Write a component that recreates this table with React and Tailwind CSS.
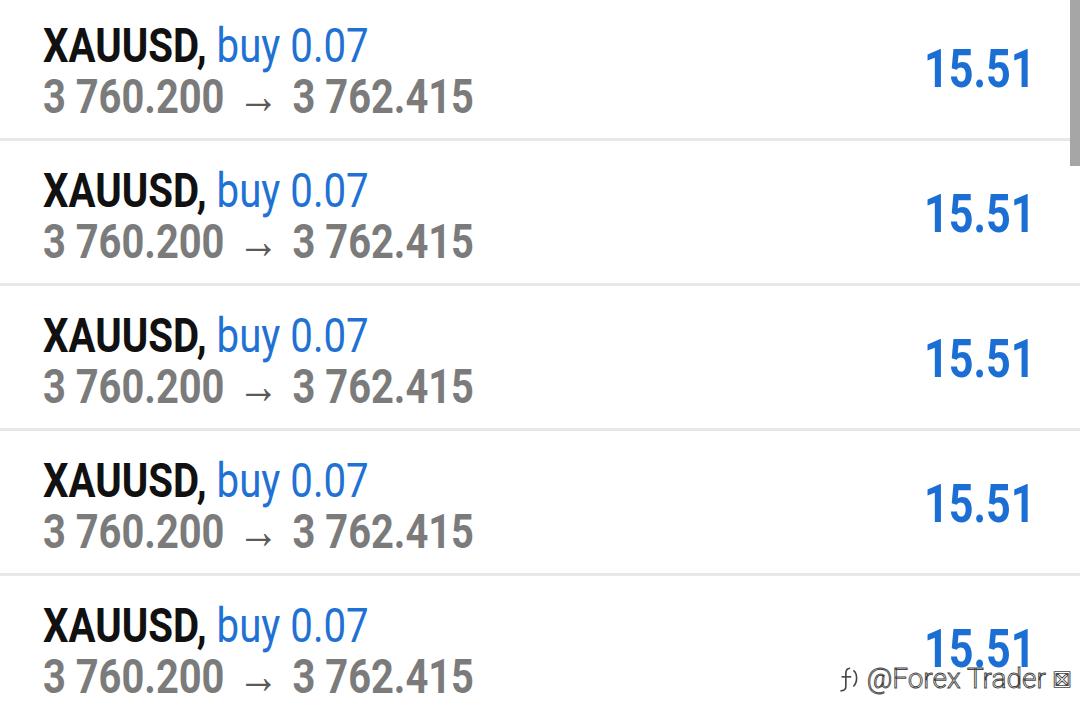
const trades = Array.from({ length: 5 }, () => ({
  symbol: 'XAUUSD',
  side: 'buy',
  volume: '0.07',
  open: '3 760.200',
  close: '3 762.415',
  profit: '15.51',
}))

function Watermark() {
  return (
    <div
      className="absolute right-[8px] bottom-[24px] flex items-center gap-[6px] text-[28px] leading-none text-white"
      style={{ fontFamily: 'Roboto, "Noto Sans", sans-serif', fontWeight: 300, WebkitTextStroke: '0.9px #444' }}
    >
      <svg width="26" height="28" viewBox="0 0 24 26" fill="none" stroke="#444" strokeWidth="1.5">
        <path d="M14 3c-3 0-4 2-4 5v12c0 3-2 4-5 4" />
        <path d="M6 11h9" />
        <path d="M17 5c4 3 4 11 0 15" />
      </svg>
      <span>@Forex Trader</span>
      <span className="text-[24px]">⊠</span>
    </div>
  )
}

export default function App() {
  return (
    <div className="relative w-[1080px] h-[717px] overflow-hidden bg-white" style={{ fontFamily: 'Roboto, "Liberation Sans", sans-serif' }}>
      <div className="-mt-[4px]">
        {trades.map((t, i) => (
          <div key={i} className="flex justify-between h-[145px] border-b-[3px] border-[#e8e8e8] pl-[43px] pr-[44px]">
            <div className="pt-[25px]">
              <div className="text-[49px] leading-[50px] origin-left scale-x-[0.82] whitespace-nowrap">
                <span className="font-bold text-[#111]">{t.symbol},</span>{' '}
                <span className="text-[#1f72d3]">{t.side} {t.volume}</span>
              </div>
              <div className="text-[48px] leading-[50px] font-bold text-[#7b7b7b] origin-left scale-x-[0.83] whitespace-nowrap">
                {t.open}
                <span className="inline-block px-[16px] font-normal text-[#5a5a5a] text-[50px]">→</span>
                {t.close}
              </div>
            </div>
            <div className="self-center mt-[2px] text-[54px] font-bold text-[#1b6fd4] origin-right scale-x-[0.8]">{t.profit}</div>
          </div>
        ))}
      </div>
      <div className="absolute right-0 top-0 w-[10px] h-[166px] bg-[#a6a6a6]" />
      <Watermark />
    </div>
  )
}
